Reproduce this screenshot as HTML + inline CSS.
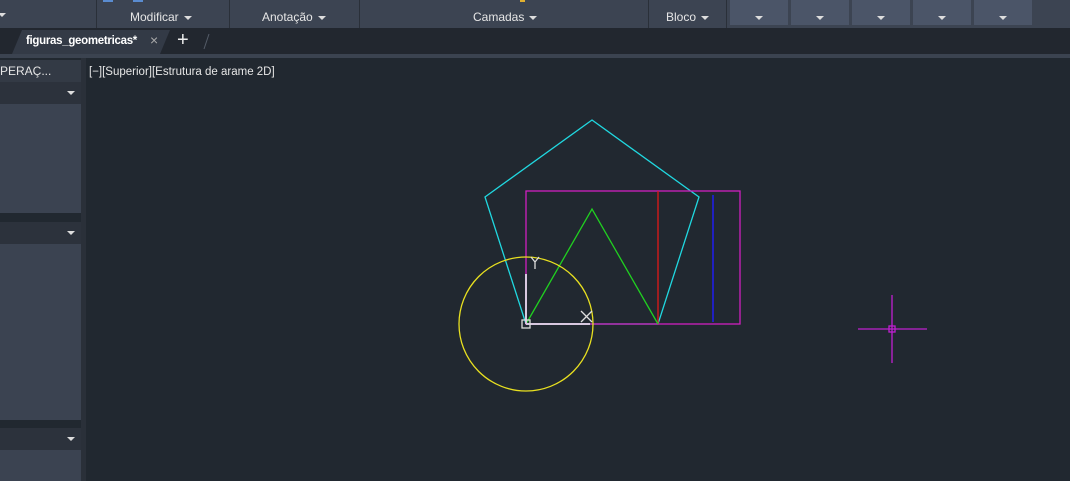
<!DOCTYPE html>
<html><head><meta charset="utf-8"><style>
body{margin:0;width:1070px;height:481px;overflow:hidden;background:#212830;font-family:"Liberation Sans",sans-serif;position:relative}
div{position:absolute;box-sizing:border-box}
.rib{left:0;top:0;width:1070px;height:28px;background:#3c4452}
.lbl{top:10px;color:#e6e6e6;font-size:12px;white-space:nowrap}
.sep{top:0;width:1px;height:28px;background:#2a3039}
.btn{top:0;width:58px;height:25px;background:#4b5568}
.tri{display:inline-block;width:0;height:0;border-left:4px solid transparent;border-right:4px solid transparent;border-top:4px solid #ddd;vertical-align:middle;margin-left:5px}
.bt{position:absolute;left:25px;top:16px;margin:0}
.dd{left:0;width:81px;height:22px;background:#2c323c}
.dd .tri{position:absolute;right:6px;top:9px}
.ct{left:0;width:81px;background:#3b4351}
</style></head><body>
<div class="rib"></div>
<div class="sep" style="left:96px"></div><div class="sep" style="left:229px"></div><div class="sep" style="left:359px"></div><div class="sep" style="left:648px"></div><div class="sep" style="left:726px"></div>
<div class="lbl" style="left:0;top:7px"><span class="tri" style="margin-left:-2px"></span></div>
<div class="lbl" style="left:130px">Modificar<span class="tri"></span></div>
<div class="lbl" style="left:262px">Anotação<span class="tri"></span></div>
<div class="lbl" style="left:473px">Camadas<span class="tri"></span></div>
<div class="lbl" style="left:666px">Bloco<span class="tri"></span></div>
<div style="left:103px;top:0;width:10px;height:2px;background:#5a8cd0"></div>
<div style="left:133px;top:0;width:10px;height:2px;background:#5a8cd0"></div>
<div style="left:520px;top:0;width:5px;height:2px;background:#e0b030"></div>
<div class="btn" style="left:730px"><span class="tri bt"></span></div>
<div class="btn" style="left:791px"><span class="tri bt"></span></div>
<div class="btn" style="left:852px"><span class="tri bt"></span></div>
<div class="btn" style="left:913px"><span class="tri bt"></span></div>
<div class="btn" style="left:974px"><span class="tri bt"></span></div>
<div style="left:0;top:28px;width:1070px;height:26px;background:#22272f"></div>
<svg style="position:absolute;left:0;top:28px" width="220" height="26"><polygon points="12,26 22,2 170,2 160,26" fill="#333a46"/><line x1="209" y1="6" x2="204" y2="21" stroke="#555c68"/></svg>
<div style="left:26px;top:35px;color:#fff;font-size:11.5px;font-weight:bold;letter-spacing:-0.3px">figuras_geometricas*</div>
<div style="left:150px;top:32px;color:#aaa;font-size:14px">×</div>
<div style="left:177px;top:29px;color:#eee;font-size:20px">+</div>
<div style="left:0;top:54px;width:1070px;height:4px;background:#3b4350"></div>
<div style="left:81px;top:58px;width:5px;height:423px;background:#2a3039"></div>
<div style="left:0;top:60px;width:81px;height:22px;background:#333a45;color:#e6e6e6;font-size:12px;padding:4px 0 0 0">PERAÇ...</div>
<div class="dd" style="top:82px"><span class="tri"></span></div>
<div class="ct" style="top:104px;height:109px"></div>
<div class="dd" style="top:222px"><span class="tri"></span></div>
<div class="ct" style="top:244px;height:176px"></div>
<div class="dd" style="top:428px"><span class="tri"></span></div>
<div class="ct" style="top:450px;height:31px"></div>
<div style="left:89px;top:66px;color:#e6e6e6;font-size:11.5px">[−][Superior][Estrutura de arame 2D]</div>
<svg style="position:absolute;left:0;top:0" width="1070" height="481" fill="none" stroke-width="1.3">
<polygon points="592,120 699,197 658,324 526,324 485,197" stroke="#20d8e0"/>
<rect x="526" y="191" width="214" height="133" stroke="#d020c0"/>
<line x1="658" y1="191" x2="658" y2="324" stroke="#e01818"/>
<line x1="713" y1="195" x2="713" y2="322" stroke="#2020c0" stroke-width="2"/>
<polyline points="526,324 592,209 658,324" stroke="#20d020"/>
<circle cx="526" cy="324" r="67" stroke="#e8e020"/>
<line x1="526" y1="324" x2="526" y2="274" stroke="#d8c8e0" stroke-width="2"/>
<line x1="526" y1="324" x2="590" y2="324" stroke="#d8c8e0" stroke-width="2"/>
<rect x="522" y="320" width="8" height="8" stroke="#ddd"/>
<path d="M531,257 L535,262 L539,257 M535,262 L535,269" stroke="#ddd"/>
<path d="M581,311 L592,322 M592,311 L581,322" stroke="#ddd"/>
<line x1="892" y1="295" x2="892" y2="363" stroke="#c020d0"/>
<line x1="858" y1="329" x2="927" y2="329" stroke="#c020d0"/>
<rect x="889" y="326" width="6" height="6" stroke="#c020d0"/>
</svg>
</body></html>
